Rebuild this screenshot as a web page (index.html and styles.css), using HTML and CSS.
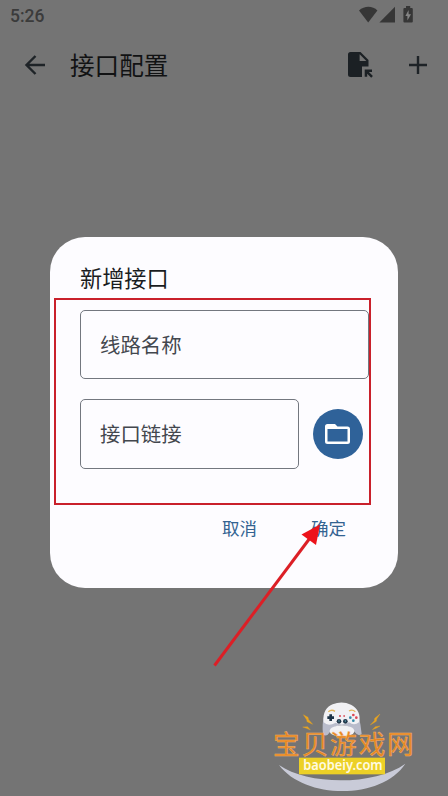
FILE: index.html
```
<!DOCTYPE html>
<html lang="zh-CN">
<head>
    <meta charset="utf-8">
    <title>接口配置</title>
    <link rel="stylesheet" href="styles.css">
</head>
<body>
    <div class="statusbar">
        <span class="clock">5:26</span>
        <svg class="status-icons" width="56" height="18" viewBox="0 0 56 18">
            <path d="M0 4.4C5.4-.4 13.6-.4 18.400 4.400L9.200 16.400z"/>
            <path d="M36 0.800V16.400H20.400z"/>
            <path d="M45.400 2H47V0H51.200V2H52.800Q53.800 2 53.800 3V15.400Q53.800 16.400 52.800 16.400H45.400Q44.400 16.400 44.400 15.400V3Q44.400 2 45.400 2z"/>
            <path class="bolt" d="M49.600 4L46.400 10H48.400V14.400L52 8.200H49.600z"/>
        </svg>
    </div>
    <div class="appbar">
        <svg class="back" width="22" height="20" viewBox="0 0 22 20">
            <path d="M21 10H2.500M11.500 1L2.500 10L11.500 19"/>
        </svg>
        <h1>接口配置</h1>
        <svg class="import" width="26" height="26" viewBox="0 0 26 26">
            <path d="M2.500 0H12.500L20.500 8V14.500H14V25H2.500Q0 25 0 22.500V2.500Q0 0 2.500 0z"/>
            <path class="fold" d="M11.600 2.200V9H18.400z"/>
            <path d="M16.700 17.600H24V20H20.900L24.900 24L23.200 25.700L19.200 21.700V24.800H16.700z"/>
        </svg>
        <svg class="add" width="18" height="18" viewBox="0 0 18 18">
            <path d="M9 0V18M0 9H18"/>
        </svg>
    </div>

    <div class="overlay">
        <div class="dialog">
            <h2>新增接口</h2>
            <div class="field">线路名称</div>
            <div class="row">
                <div class="field">接口链接</div>
                <button class="folder">
                    <svg width="26" height="21" viewBox="0 0 26 21">
                        <path d="M2.500 0H10L12.500 2.500H22.500Q25 2.500 25 5V17.500Q25 20 22.500 20H2.500Q0 20 0 17.500V2.500Q0 0 2.500 0zM2.500 5V17.500H22.500V5z"/>
                    </svg>
                </button>
            </div>
            <div class="actions">
                <button>取消</button>
                <button>确定</button>
            </div>
        </div>
    </div>

    <div class="mark-box"></div>
    <svg class="mark-arrow" width="120" height="150" viewBox="0 0 120 150">
        <path class="shaft" d="M4.500 145.500L100 18"/>
        <path class="head" d="M110 4.500L91.500 14.500L106 25z"/>
    </svg>

    <svg class="watermark" width="160" height="101" viewBox="0 0 480 303">
        <path class="smile" d="M42 210C130 272 330 272 421 206C350 315 120 315 42 210z"/>
        <!-- gamepad -->
        <path class="pad-shade" d="M174 118C170 75 178 45 200 33Q228 15 258 33C282 47 286 80 290 117Q280 126 269 111Q257 91 232 91Q206 91 195 111Q184 128 174 118z"/>
        <path class="pad" d="M176 82C172 52 186 34 203 28Q231 17 258 29C279 40 288 60 282 82Q267 94 252 82Q230 94 212 83Q190 96 176 82z"/>
        <ellipse class="pad" cx="231" cy="108" rx="37" ry="17"/>
        <path class="trim" d="M190 50Q200 42 210 49M252 48Q262 42 271 50"/>
        <path class="cross" d="M187 68H207M197 58V78"/>
        <circle class="stick" cx="222" cy="79" r="7"/>
        <circle class="stick" cx="241" cy="79" r="7"/>
        <circle class="dot" cx="222" cy="78" r="2"/>
        <circle class="dot" cx="241" cy="78" r="2"/>
        <path class="red" d="M222 63H228M235 63H240"/>
        <circle class="btn-red" cx="265" cy="60" r="4"/>
        <circle class="btn-blue" cx="256" cy="68" r="4"/>
        <circle class="btn-red" cx="274" cy="68" r="4"/>
        <circle class="btn-blue" cx="265" cy="77" r="4"/>
        <g class="sparks">
            <path d="M115 59L129 67L131 74L143 88L126 80L125 74z"/>
            <path d="M113 96L128 95L136 105L124 100z"/>
            <path d="M345 57L329 70L328 77L316 90L334 79L335 72z"/>
            <path d="M345 93L331 95L322 104L335 99z"/>
        </g>
        <rect class="plate" x="102" y="188" width="258" height="50"/>
        <text class="name" x="24 110 195 281 366" y="177">宝贝游戏网</text>
        <text class="url" x="115" y="226" textLength="238" lengthAdjust="spacingAndGlyphs">baobeiy.com</text>
    </svg>
</body>
</html>
```
FILE: styles.css
```
* {
    box-sizing: border-box;
}
body {
    position: relative;
    margin: 0;
    height: 796px;
    overflow: hidden;
    background-color: #747474;
    font-family: Roboto, "Noto Sans CJK SC", sans-serif;
    color: #1a1c1e;
}
h1, h2 {
    margin: 0;
    font-weight: 400;
}
.statusbar {
    display: flex;
    justify-content: space-between;
    height: 30px;
    padding: 6px 33px 0 10px;
}
.clock {
    font-size: 17.5px;
    line-height: 20px;
    font-weight: 500;
    color: #3b3b3b;
}
.status-icons {
    fill: #363636;
}
.status-icons .bolt {
    fill: #858585;
}
.appbar {
    display: flex;
    align-items: center;
    height: 70px;
    padding: 0 21px 0 24px;
}
.appbar h1 {
    flex: 1;
    margin-left: 24px;
    padding-top: 4px;
    font-size: 24.6px;
    line-height: 36px;
    color: #111213;
}
.back, .add {
    fill: none;
    stroke: #1e2327;
    stroke-width: 2.4;
}
.add {
    margin-left: 35px;
}
.import {
    fill: #1b2024;
}
.import .fold {
    fill: #747474;
}
.overlay {
    position: absolute;
    inset: 0;
    display: flex;
    justify-content: center;
    align-items: flex-start;
    padding-top: 237px;
}
.dialog {
    width: 348px;
    height: 351px;
    padding: 26px 30px 0;
    border-radius: 35px;
    background-color: #fdfcff;
}
.dialog h2 {
    font-size: 22.2px;
    line-height: 32px;
    margin-bottom: 15px;
}
.field {
    display: flex;
    align-items: center;
    height: 69px;
    padding: 0 0 2px 19px;
    border: 1px solid #73777f;
    border-radius: 5px;
    font-size: 20.4px;
    color: #43474e;
}
.row {
    display: flex;
    align-items: center;
    gap: 15px;
    margin-top: 20px;
}
.row .field {
    width: 219px;
    height: 70px;
}
button {
    padding: 0;
    border: none;
    background: none;
    font-family: inherit;
}
.folder {
    display: flex;
    justify-content: center;
    align-items: center;
    flex: none;
    width: 50px;
    height: 50px;
    margin-left: -1px;
    border-radius: 50%;
    background-color: #2f6299;
}
.folder svg {
    fill: #ffffff;
}
.dialog > .field {
    width: 289px;
}
.actions {
    display: flex;
    justify-content: flex-end;
    gap: 54px;
    margin-top: 47px;
    padding-right: 22px;
}
.actions button {
    font-size: 17.5px;
    line-height: 26px;
    color: #336391;
}
.mark-box {
    position: absolute;
    left: 54px;
    top: 298px;
    width: 317px;
    height: 207px;
    border: 2px solid #c9202b;
}
.mark-arrow {
    position: absolute;
    left: 210px;
    top: 520px;
}
.mark-arrow .shaft {
    stroke: #dc1f26;
    stroke-width: 3;
}
.mark-arrow .head {
    fill: #ec131b;
}
.watermark {
    position: absolute;
    left: 265px;
    top: 695px;
}
.smile {
    fill: #c9cbd8;
}
.pad {
    fill: #f1f1f4;
}
.pad-shade {
    fill: #b9bccb;
}
.trim {
    fill: none;
    stroke: #e3b65b;
    stroke-width: 4;
}
.cross {
    stroke: #1d3346;
    stroke-width: 8;
}
.stick {
    fill: #22384c;
}
.dot {
    fill: #5fa8b8;
}
.red {
    stroke: #d84a55;
    stroke-width: 4;
}
.btn-red {
    fill: #dc4653;
}
.btn-blue {
    fill: #3389a6;
}
.sparks {
    fill: #e9a51f;
    stroke: #e9a51f;
    stroke-width: 1;
}
.name {
    font-family: "Noto Sans CJK SC", sans-serif;
    font-size: 80px;
    font-weight: 400;
    fill: #e8851c;
    stroke: #efb06c;
    stroke-width: 1.5;
}
.plate {
    fill: #ecd026;
}
.url {
    font-family: "Noto Sans", "Open Sans", sans-serif;
    font-size: 44px;
    font-weight: 600;
    fill: #fffbe0;
}
```
